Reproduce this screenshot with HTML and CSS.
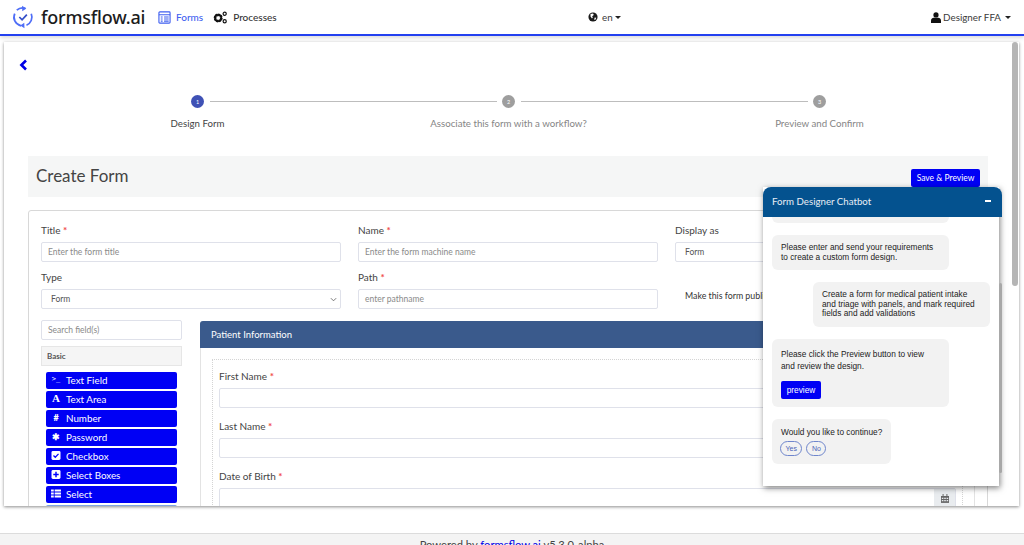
FILE: index.html
```html
<!DOCTYPE html>
<html lang="en">
<head>
<meta charset="utf-8">
<title>formsflow.ai</title>
<link rel="stylesheet" href="styles.css">
</head>
<body>
<header class="topbar">
  <div class="brand">
    <svg class="logo" viewBox="0 0 24 26" width="22" height="26"><g fill="none" stroke="#4f6ef7" stroke-width="1.9"><path d="M5.2 5.6A9.6 9.6 0 0 1 14.6 3.6"/><path d="M21 9.5A9.6 9.6 0 0 1 15.8 22"/><path d="M10 22.6A9.6 9.6 0 0 1 3 9.2"/><path d="M8 13l3 3 5.2-5.6" stroke="#3550c8"/></g><path d="M11 .6l4.6 3-4.4 3z M13.6 25.4l-4.6-3 4.4-3z" fill="#4f6ef7"/></svg>
    <span class="brand-name">formsflow.ai</span>
  </div>
  <nav class="nav">
    <a class="nav-item active"><svg viewBox="0 0 14 14" width="13" height="13"><rect x="1" y="1" width="12" height="12" rx="1" fill="none" stroke="#3f5ff0" stroke-width="1.2"/><path d="M1 4h12M3 6.5h2M3 8.7h2M3 10.9h2M6.5 6.5h5M6.5 8.7h5M6.5 10.9h5" stroke="#3f5ff0" stroke-width="1.1"/></svg>Forms</a>
    <a class="nav-item"><svg viewBox="0 0 16 14" width="15" height="13"><circle cx="5.5" cy="7.5" r="3.4" fill="none" stroke="#111" stroke-width="2.8" stroke-dasharray="1.9 .7"/><circle cx="5.5" cy="7.5" r="3.4" fill="none" stroke="#111" stroke-width="1.9"/><circle cx="12.5" cy="3" r="1.7" fill="none" stroke="#111" stroke-width="1.3"/><circle cx="12.5" cy="11" r="1.7" fill="none" stroke="#111" stroke-width="1.3"/></svg>Processes</a>
  </nav>
  <div class="lang"><svg viewBox="0 0 12 12" width="10" height="10"><circle cx="6" cy="6" r="5.5" fill="#1a1a1a"/><path d="M3 2.5l3-.6 1 1.6-2 1.5.8 1.6-1 1.2L3 5.5zM8 6.5l2 .5-1.4 2.5-1.2-.6z" fill="#fff"/></svg><span>en</span><i class="caret tight"></i></div>
  <div class="user"><svg viewBox="0 0 10 11" width="10" height="11"><circle cx="5" cy="2.9" r="2.6" fill="#111"/><path d="M0 11V8.4C0 6.6 1.6 5.8 2.6 5.8h4.8c1 0 2.6.8 2.6 2.6V11z" fill="#111"/></svg>Designer FFA<i class="caret"></i></div>
</header>

<main class="page">
  <a class="back"><svg viewBox="0 0 9 12" width="9" height="12"><path d="M7 1.5 2.4 6 7 10.5" fill="none" stroke="#0000e6" stroke-width="2.6"/></svg></a>

  <ol class="stepper">
    <li class="step current"><span class="dot">1</span><span class="step-label">Design Form</span></li>
    <li class="step"><span class="dot">2</span><span class="step-label">Associate this form with a workflow?</span></li>
    <li class="step"><span class="dot">3</span><span class="step-label">Preview and Confirm</span></li>
  </ol>

  <div class="titlebar">
    <h1>Create Form</h1>
    <button class="save">Save &amp; Preview</button>
  </div>

  <section class="formcard">
    <div class="fields">
      <div class="field"><label>Title <b>*</b></label><div class="input ph">Enter the form title</div></div>
      <div class="field"><label>Name <b>*</b></label><div class="input ph">Enter the form machine name</div></div>
      <div class="field"><label>Display as</label><div class="input indent">Form</div></div>
      <div class="field"><label>Type</label><div class="input select">Form<svg viewBox="0 0 8 5" width="7" height="5"><path d="M1 1l3 3 3-3" fill="none" stroke="#666" stroke-width="1"/></svg></div></div>
      <div class="field"><label>Path <b>*</b></label><div class="input ph">enter pathname</div></div>
      <div class="public">Make this form public</div>
    </div>

    <div class="builder">
      <aside class="palette">
        <div class="input ph search">Search field(s)</div>
        <div class="group">Basic</div>
        <ul class="tools">
          <li><span class="ti mono">&gt;_</span>Text Field</li>
          <li><span class="ti serif">A</span>Text Area</li>
          <li><span class="ti bold">#</span>Number</li>
          <li><span class="ti bold">✱</span>Password</li>
          <li><svg class="ti" viewBox="0 0 10 10" width="9" height="9"><rect width="10" height="10" rx="1.6" fill="#fff"/><path d="M2.2 5l2 2 3.6-3.8" fill="none" stroke="#00f" stroke-width="1.4"/></svg>Checkbox</li>
          <li><svg class="ti" viewBox="0 0 10 10" width="9" height="9"><rect width="10" height="10" rx="1.6" fill="#fff"/><path d="M5 2v6M2 5h6" stroke="#00f" stroke-width="1.6"/></svg>Select Boxes</li>
          <li><svg class="ti" viewBox="0 0 11 10" width="10" height="9"><path d="M0 .5h3v2.4H0zM4 .5h7v2.4H4zM0 3.8h3v2.4H0zM4 3.8h7v2.4H4zM0 7.1h3v2.4H0zM4 7.1h7v2.4H4z" fill="#fff"/></svg>Select</li>
          <li class="faded"></li>
        </ul>
      </aside>
      <div class="panel">
        <div class="panel-head">Patient Information</div>
        <div class="dropzone">
          <div class="field wide"><label>First Name <b>*</b></label><div class="input tall"></div></div>
          <div class="field wide"><label>Last Name <b>*</b></label><div class="input tall"></div></div>
          <div class="field wide"><label>Date of Birth <b>*</b></label><div class="input tall date"><span class="addon"><svg viewBox="0 0 10 11" width="8" height="9"><path d="M0 2.4h10V11H0z" fill="#666"/><path d="M2 0h1.2v2.6H2zM6.8 0H8v2.6H6.8z" fill="#666"/><path d="M1 4.6h2v1.4H1zM4 4.6h2v1.4H4zM7 4.6h2v1.4H7zM1 7.4h2v1.4H1zM4 7.4h2v1.4H4zM7 7.4h2v1.4H7z" fill="#e9ecef"/></svg></span></div></div>
        </div>
      </div>
    </div>
  </section>
  <div class="scrollthumb"></div>
</main>

<aside class="chat">
  <div class="chat-head"><span>Form Designer Chatbot</span><i class="minus"></i></div>
  <div class="chat-body">
    <div class="bubble cut"></div>
    <div class="bubble">Please enter and send your requirements to create a custom form design.</div>
    <div class="bubble me">Create a form for medical patient intake and triage with panels, and mark required fields and add validations</div>
    <div class="bubble loose">Please click the Preview button to view and review the design.<button class="preview">preview</button></div>
    <div class="bubble short"><span class="ask">Would you like to continue?</span><div class="choices"><span>Yes</span><span>No</span></div></div>
  </div>
  <div class="chat-thumb"></div>
</aside>

<footer class="footer">Powered by <a>formsflow.ai</a> v5.3.0-alpha</footer>
</body>
</html>
```
FILE: styles.css
```css
* { box-sizing: border-box; }
html, body { margin: 0; height: 545px; overflow: hidden; }
body { font-family: "Lato", "Noto Sans", sans-serif; color: #3a3a3a; background: #fff; display: flex; flex-direction: column; position: relative; }
ol, ul { list-style: none; margin: 0; padding: 0; }
b { color: #f04a4a; font-weight: 700; }

.topbar { height: 36px; flex: none; display: flex; align-items: center; padding: 0 13px 0 12px; border-bottom: 2px solid #2340f0; background: #fff; box-shadow: 0 2px 4px rgba(0,0,0,.14); position: relative; z-index: 1; }
.brand { display: flex; align-items: center; width: 146px; gap: 7px; }
.logo { flex: none; }
.brand-name { font-size: 18px; font-weight: 500; color: #1c1c1c; font-family: "Noto Sans", sans-serif; letter-spacing: -.2px; }
.nav { display: flex; gap: 10px; width: 430px; font-size: 10px; font-weight: 500; }
.nav-item { display: flex; align-items: center; gap: 5px; color: #333; }
.nav-item.active { color: #3f5ff0; }
.lang { display: flex; align-items: center; gap: 4px; font-size: 9.8px; }
.user { display: flex; align-items: center; gap: 2px; margin-left: auto; font-size: 9.8px; }
.caret { width: 0; height: 0; border: 3px solid transparent; border-top: 3px solid #222; border-bottom: 0; margin-left: 2px; }
.caret.tight { margin-left: -2px; }

.page { width: 1015px; height: 464px; flex: none; margin: 6px 0 0 4px; background: #fff; box-shadow: 0 1px 3px rgba(0,0,0,.45); overflow: hidden; position: relative; padding: 0 0 0 24px; }
.back { display: block; height: 12px; margin: 13px 0 0 -9px; }

.stepper { display: grid; grid-template-columns: repeat(3, 311px); margin: 28px 0 0 14px; }
.step { display: flex; flex-direction: column; align-items: center; position: relative; font-size: 9.7px; color: #858585; }
.dot { width: 13px; height: 13px; border-radius: 50%; background: #9e9e9e; color: #fff; font-size: 5.5px; display: flex; align-items: center; justify-content: center; }
.current .dot { background: #3f51b5; }
.current .step-label { color: #444; }
.step-label { margin-top: 9px; line-height: 12px; }
.step:not(:last-child)::after { content: ""; position: absolute; top: 6px; left: calc(50% + 12px); width: 287px; height: 1px; background: #bdbdbd; }

.titlebar { width: 960px; height: 41px; margin-top: 27px; background: #f5f6f6; display: flex; align-items: center; justify-content: space-between; padding: 0 8px 2px; position: relative; }
.titlebar h1 { margin: 0; font-size: 17px; font-weight: 400; color: #444; }
.save { background: #0000f5; color: #fff; border: 0; border-radius: 2px; width: 69px; height: 18px; padding: 0; font: 8.5px "Lato", sans-serif; position: relative; top: 2px; }

.formcard { width: 960px; margin-top: 13px; border: 1px solid #d8d8d8; border-radius: 3px; padding: 12px 12px 0; height: 320px; }
.fields { display: grid; grid-template-columns: repeat(3, 300px); gap: 8px 17px; }
.field label { display: block; font-size: 10px; line-height: 14px; color: #444; margin-bottom: 5px; }
.input { height: 20px; border: 1px solid #dfe1ea; border-radius: 2px; background: #fff; font-size: 8.5px; line-height: 18px; padding: 0 6px; color: #555; position: relative; }
.indent { padding-left: 9px; }
.ph { color: #8a8a8a; }
.select { display: flex; justify-content: space-between; align-items: center; padding: 0 3px 0 9px; }
.public { font-size: 8.8px; padding: 20px 0 0 10px; color: #333; white-space: nowrap; }

.builder { display: flex; margin-top: 11px; }
.palette { width: 141px; flex: none; margin-right: 18px; }
.group { margin-top: 6px; height: 20px; background: #f5f5f5; border: 1px solid #e6e6e6; font-size: 8px; font-weight: 700; line-height: 18px; padding-left: 5px; color: #555; }
.tools { padding: 6px 5px 0; display: flex; flex-direction: column; gap: 2px; }
.tools li { height: 17px; background: #0000f5; color: #fff; border-radius: 2px; font-size: 9.8px; display: flex; align-items: center; padding: 0 0 2px 5px; gap: 5px; flex: none; }
.tools .faded { background: #7fa4e4; }
.ti { width: 10px; text-align: center; flex: none; font-size: 9px; line-height: 1; }
.mono { font-family: "DejaVu Sans Mono", monospace; font-size: 7px; }
.serif { font-family: "Liberation Serif", serif; font-weight: 700; font-size: 11px; }
.bold { font-weight: 900; }

.panel { width: 775px; flex: none; margin-top: 1px; border: 1px solid #e3e3e3; border-radius: 3px 3px 0 0; height: 300px; }
.panel-head { height: 27px; margin: -1px -1px 0; background: #3a5a8c; color: #fff; font-size: 9.5px; line-height: 27px; padding-left: 11px; border-radius: 3px 3px 0 0; }
.dropzone { margin: 11px 11px 0; border: 1px dotted #d4d4d4; padding: 9px 6px 0; height: 200px; }
.wide { margin-bottom: 11px; }
.tall { height: 20px; }
.date { padding: 0; }
.addon { position: absolute; right: 0; top: 0; bottom: 0; width: 21px; background: #e9ecef; display: flex; align-items: center; justify-content: center; }

.scrollthumb { position: absolute; top: 0; right: 1px; width: 6px; height: 244px; background: #b5b5b5; border-radius: 3px; }

.chat { position: absolute; left: 763px; top: 187px; width: 239px; height: 299px; z-index: 2; background: transparent; }
.chat::before { content: ""; position: absolute; inset: 0 3px 0 0; background: #fff; box-shadow: 1px 2px 6px rgba(0,0,0,.5); }
.chat-head { position: relative; height: 30px; background: #04528f; color: #e8eef5; font-size: 9.7px; display: flex; align-items: center; justify-content: space-between; padding: 0 11px 2px 9px; border-radius: 8px 8px 0 0; }
.minus { width: 6px; height: 2px; background: #fff; }
.chat-body { position: relative; font-family: "Liberation Sans", sans-serif; font-size: 8.3px; line-height: 9.6px; color: #222; padding: 0 9px; display: flex; flex-direction: column; gap: 12px; align-items: flex-start; }
.bubble { width: 177px; background: #f2f2f2; border-radius: 6px; padding: 8px 9px; }
.cut { height: 6px; padding: 0; border-radius: 0 0 6px 6px; }
.me { align-self: flex-end; margin-right: 3px; height: 45px; }
.bubble.loose { line-height: 12px; height: 68px; padding: 9px 16px 0 9px; }
.preview { display: block; width: 40px; height: 18px; margin-top: 9px; background: #0000f5; color: #fff; border: 0; border-radius: 2px; padding: 0; font: 8.3px "Liberation Sans", sans-serif; }
.bubble.short { width: 119px; height: 45px; line-height: 11px; padding: 8px 0 0 9px; }
.ask { white-space: nowrap; }
.choices { display: flex; gap: 4px; margin-top: 3px; margin-left: -1px; }
.choices span { border: 1px solid #6f86cc; border-radius: 8px; height: 15px; padding: 0 4.5px; color: #4a63b8; font-size: 7px; line-height: 13px; }
.chat-thumb { position: absolute; right: 0; top: 96px; width: 3px; height: 190px; background: #a8a8a8; border-radius: 2px; }

.footer { position: absolute; left: 0; right: 0; top: 533px; height: 12px; background: #f4f4f4; border-top: 1px solid #dcdcdc; text-align: center; font-size: 11.2px; line-height: 14px; padding-top: 4px; color: #444; white-space: nowrap; overflow: hidden; }
.footer a { color: #0000e6; text-decoration: underline; }
```
